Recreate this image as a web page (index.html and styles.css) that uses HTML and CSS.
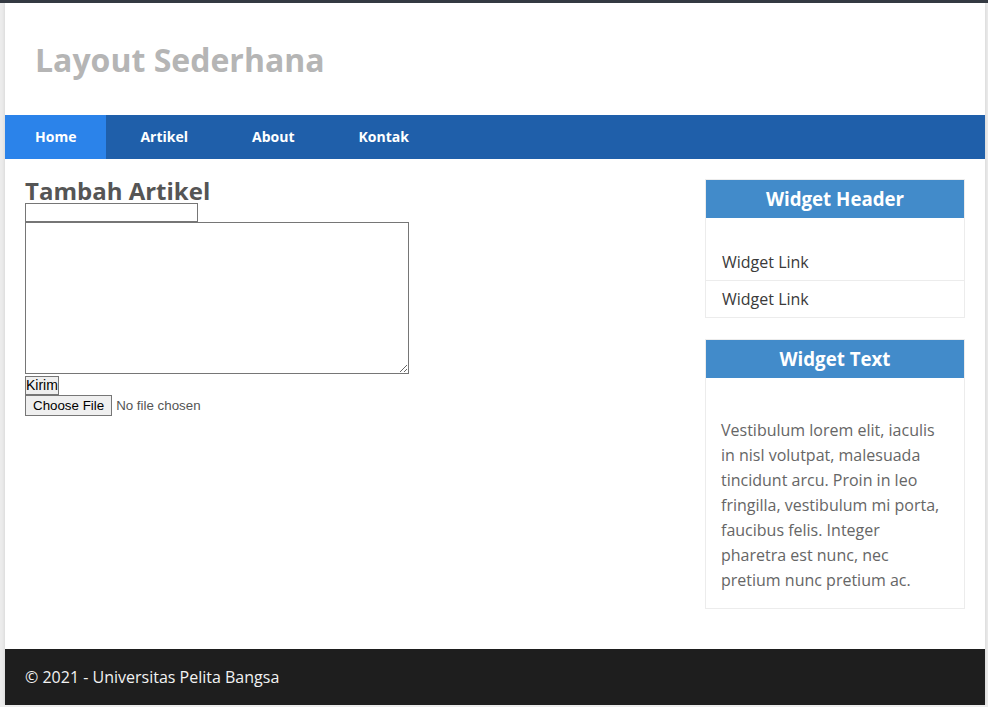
FILE: index.html
```html
<!DOCTYPE html>
<html lang="id">
<head>
<meta charset="utf-8">
<title>Layout Sederhana</title>
<link rel="stylesheet" href="styles.css">
</head>
<body>
<div class="container">
  <header class="site-header">
    <h1 class="site-title">Layout Sederhana</h1>
  </header>
  <nav class="site-nav">
    <a href="#" class="nav-link active">Home</a>
    <a href="#" class="nav-link">Artikel</a>
    <a href="#" class="nav-link">About</a>
    <a href="#" class="nav-link">Kontak</a>
  </nav>
  <div class="main">
    <section class="content">
      <h2 class="content-title">Tambah Artikel</h2>
      <form class="article-form">
        <input type="text" class="field-title">
        <textarea class="field-body"></textarea>
        <button type="button" class="btn-send">Kirim</button>
        <input type="file" class="field-file">
      </form>
    </section>
    <aside class="sidebar">
      <div class="widget">
        <h3 class="widget-header">Widget Header</h3>
        <ul class="widget-list">
          <li class="widget-item"><a href="#" class="widget-link">Widget Link</a></li>
          <li class="widget-item"><a href="#" class="widget-link">Widget Link</a></li>
        </ul>
      </div>
      <div class="widget">
        <h3 class="widget-header">Widget Text</h3>
        <div class="widget-body">
          <p class="widget-text">Vestibulum lorem elit, iaculis in nisl volutpat, malesuada tincidunt arcu. Proin in leo fringilla, vestibulum mi porta, faucibus felis. Integer pharetra est nunc, nec pretium nunc pretium ac.</p>
        </div>
      </div>
    </aside>
  </div>
  <footer class="site-footer">
    <p class="footer-text">&copy; 2021 - Universitas Pelita Bangsa</p>
  </footer>
</div>
</body>
</html>
```

FILE: styles.css
```css
* {
  margin: 0;
  padding: 0;
}

html, body {
  background: #ececec;
}

body {
  border-top: 3px solid #343a42;
  font-family: "Open Sans", "Liberation Sans", sans-serif;
  color: #555;
}

.container {
  width: 980px;
  margin: 0 0 0 5px;
  background: #fff;
  box-shadow: 0 0 4px rgba(0, 0, 0, 0.12);
}

.site-header {
  padding: 35px 30px 33px;
}

.site-title {
  font-size: 32px;
  font-weight: 700;
  color: #b5b5b5;
  line-height: 44px;
}

.site-nav {
  display: flex;
  gap: 4px;
  background: #1f5faa;
}

.nav-link {
  display: block;
  padding: 0 30px;
  line-height: 44px;
  font-size: 14px;
  font-weight: 700;
  color: #fff;
  text-decoration: none;
}

.nav-link.active {
  background: #2b83ea;
}

.main {
  display: flex;
  align-items: flex-start;
  padding: 20px;
}

.content {
  flex: 1;
}

.content-title {
  font-size: 24px;
  font-weight: 700;
  line-height: 24px;
  color: #555;
}

.article-form {
  display: flex;
  flex-direction: column;
  align-items: flex-start;
}

.field-title {
  box-sizing: border-box;
  width: 173px;
  height: 19px;
  border: 1px solid #767676;
  padding: 0 2px;
  font: 13.333px "Liberation Sans", Arial, sans-serif;
}

.field-body {
  box-sizing: border-box;
  width: 384px;
  height: 152px;
  border: 1px solid #767676;
  font: 13.333px "Liberation Mono", monospace;
}

.btn-send {
  margin-top: 2px;
  padding: 1px 0;
  border: 1px solid #767676;
  background: #efefef;
  color: #000;
  font: 14px "Liberation Sans", Arial, sans-serif;
  line-height: 15px;
}

.field-file {
  font: 13.333px "Liberation Sans", Arial, sans-serif;
  color: #555;
}

.field-file::file-selector-button {
  padding: 2px 7px;
  margin-right: 4px;
  border: 1px solid #767676;
  border-radius: 0;
  background: #efefef;
  color: #000;
  font: 13.333px "Liberation Sans", Arial, sans-serif;
}

.sidebar {
  width: 260px;
  flex: none;
}

.widget {
  border: 1px solid #ececec;
  margin-bottom: 21px;
}

.widget:last-child {
  margin-bottom: 20px;
}

.widget-header {
  background: #428bca;
  color: #fff;
  text-align: center;
  font-size: 18.7px;
  font-weight: 700;
  line-height: 24px;
  padding: 7px 10px;
}

.widget-list {
  list-style: none;
  padding-top: 26px;
}

.widget-item {
  border-bottom: 1px solid #ececec;
}

.widget-item:last-child {
  border-bottom: none;
}

.widget-link {
  display: block;
  padding: 7px 16px;
  font-size: 16px;
  line-height: 22px;
  color: #3a3a3a;
  text-decoration: none;
}

.widget-body {
  padding: 40px 15px 15px;
}

.widget-text {
  font-size: 16px;
  line-height: 25px;
  color: #666;
}

.site-footer {
  background: #1e1e1e;
  padding: 17px 20px;
}

.footer-text {
  font-size: 16px;
  line-height: 22px;
  color: #f2f2f2;
}
```
